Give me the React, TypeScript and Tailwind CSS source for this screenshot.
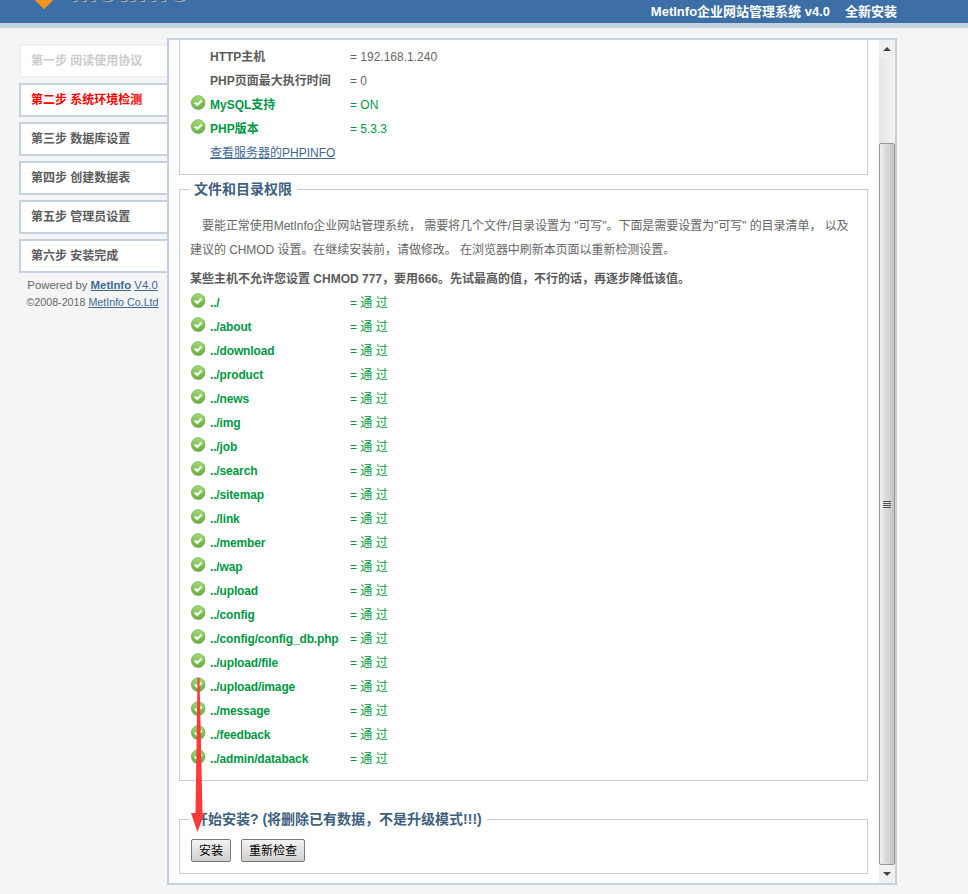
const font = '[font-family:"Liberation_Sans","Noto_Sans_CJK_SC",sans-serif]'

const steps = [
  { label: '第一步 阅读使用协议', state: 'done' },
  { label: '第二步 系统环境检测', state: 'active' },
  { label: '第三步 数据库设置', state: 'todo' },
  { label: '第四步 创建数据表', state: 'todo' },
  { label: '第五步 管理员设置', state: 'todo' },
  { label: '第六步 安装完成', state: 'todo' },
]

const paths = [
  '../',
  '../about',
  '../download',
  '../product',
  '../news',
  '../img',
  '../job',
  '../search',
  '../sitemap',
  '../link',
  '../member',
  '../wap',
  '../upload',
  '../config',
  '../config/config_db.php',
  '../upload/file',
  '../upload/image',
  '../message',
  '../feedback',
  '../admin/databack',
]

function OkIcon() {
  return (
    <svg width="15" height="16" viewBox="0 0 15 16" className="ml-px shrink-0" aria-hidden="true">
      <defs>
        <linearGradient id="ok-fill" x1="0" y1="0" x2="0" y2="1">
          <stop offset="0" stopColor="#a5dc74" />
          <stop offset="1" stopColor="#5fb53c" />
        </linearGradient>
      </defs>
      <circle cx="7.2" cy="8.4" r="7" fill="#c8c8c8" />
      <circle cx="7.2" cy="7.4" r="6.7" fill="url(#ok-fill)" stroke="#69ad4a" strokeWidth="0.8" />
      <path d="M3.9 7.5 L6.3 9.9 L10.7 5.5" fill="none" stroke="#ffffff" strokeWidth="2.2" />
    </svg>
  )
}

function Row({ ok, label, value, green, tight }: { ok?: boolean; label: string; value: string; green?: boolean; tight?: boolean }) {
  return (
    <div className="flex h-6 items-center">
      <div className="flex w-[20px] -translate-y-[2px] items-center">{ok && <OkIcon />}</div>
      <div className={`w-[140px] font-bold ${tight ? 'tracking-[-0.15px]' : ''} ${green ? 'text-[#009944]' : 'text-[#5c5c5c]'}`}>{label}</div>
      <div className={green ? 'text-[#009944]' : 'text-[#666666]'}>{value}</div>
    </div>
  )
}

function Legend({ children }: { children: React.ReactNode }) {
  return (
    <div className="absolute -top-[10px] left-[9px] bg-white px-[5px] text-sm leading-[18px] font-bold text-[#3f5f80]">
      {children}
    </div>
  )
}

function Scrollbar() {
  return (
    <div className="flex w-[16px] shrink-0 flex-col bg-[#f0f0f0]">
      <div className="flex h-[18px] items-center justify-center">
        <div className="h-0 w-0 border-x-[4px] border-b-[4px] border-x-transparent border-b-[#444444]" />
      </div>
      <div className="h-[85px] bg-gradient-to-r from-[#e6e6e6] to-[#f4f4f4]" />
      <div className="flex flex-1 items-center justify-center rounded-[2px] border border-[#979797] bg-gradient-to-r from-[#f0f0f0] via-[#d8d8d8] to-[#c4c4c4]">
        <div className="flex w-[8px] flex-col gap-[1px]">
          <div className="h-px bg-[#555555]" />
          <div className="h-px bg-[#555555]" />
          <div className="h-px bg-[#555555]" />
          <div className="h-px bg-[#555555]" />
        </div>
      </div>
      <div className="flex h-[18px] items-center justify-center">
        <div className="h-0 w-0 border-x-[4px] border-t-[4px] border-x-transparent border-t-[#444444]" />
      </div>
    </div>
  )
}

function DownArrow() {
  // red annotation drawn over the screenshot
  return (
    <svg className="pointer-events-none absolute top-[678px] left-[190px]" width="16" height="155" viewBox="0 0 16 155" aria-hidden="true">
      <path d="M7.5 0 L9.5 0 L12.5 135 L14.5 135 L7.5 154 L1 135 L5.5 135 Z" fill="#fc3a3a" />
    </svg>
  )
}

export default function App() {
  return (
    <div className={`relative h-[894px] overflow-hidden bg-[#f5f5f5] text-xs ${font}`}>
      <header className="flex h-[28px] justify-between overflow-hidden border-b-[5px] border-[#c3d1e0] bg-[#3b6fa6]">
        <div className="flex items-start pl-[34px]">
          <div className="-mt-[15px] h-[20px] w-[20px] rotate-45 bg-[#f7941d]" />
          <div className="-mt-[26px] ml-[16px] text-[32px] leading-[32px] font-bold tracking-wide text-[#4a5560] [text-shadow:1px_1px_0_#9fb0c0]">MetInfo</div>
        </div>
        <div className="flex h-[23px] items-center gap-[15px] pr-[71px] text-[13px] font-bold text-white">
          <span>MetInfo企业网站管理系统 v4.0</span>
          <span>全新安装</span>
        </div>
      </header>

      <div className="flex items-start pt-[10px] pl-[19px]">
        <aside className="w-[148px] shrink-0 pt-[6px]">
          <nav className="flex flex-col gap-[5px] font-bold">
            {steps.map((step) =>
              step.state === 'done' ? (
                <div key={step.label} className="flex h-[34px] items-center border-[2px] border-r-0 border-[#f0f0f0] bg-white pl-[10px] text-[#cccccc]">
                  {step.label}
                </div>
              ) : (
                <div
                  key={step.label}
                  className={`flex h-[34px] items-center border-[2px] border-r-0 border-[#c3d1e0] bg-white pl-[10px] ${step.state === 'active' ? 'text-[#ff0000]' : 'text-[#5c5c5c]'}`}
                >
                  {step.label}
                </div>
              ),
            )}
          </nav>
          <div className="pt-[4px] pr-px text-center leading-[17px] text-[#666666]">
            <div className="text-[11.4px]">
              Powered by <span className="font-bold text-[#3f6a94] underline">MetInfo</span>{' '}
              <span className="text-[#3f6a94] underline">V4.0</span>
            </div>
            <div className="text-[10.7px]">
              ©2008-2018 <span className="text-[#3f6a94] underline">MetInfo Co.Ltd</span>
            </div>
          </div>
        </aside>

        <main className="flex h-[847px] w-[730px] shrink-0 border-[2px] border-[#c3d1e0] bg-white">
          <div className="w-[710px] shrink-0 overflow-hidden pl-[10px]">
            <section className="h-[135px] w-[689px] border border-t-0 border-[#cccccc] px-[10px] pt-[5px]">
              <Row label="HTTP主机" value="= 192.168.1.240" />
              <Row label="PHP页面最大执行时间" value="= 0" />
              <Row ok green label="MySQL支持" value="= ON" />
              <Row ok green label="PHP版本" value="= 5.3.3" />
              <div className="flex h-6 items-center pl-[20px]">
                <span className="text-[#3f6a94] underline">查看服务器的PHPINFO</span>
              </div>
            </section>

            <section className="relative mt-[14px] h-[592px] w-[689px] border border-[#cccccc] px-[10px] pt-[24px]">
              <Legend>文件和目录权限</Legend>
              <p className="indent-[12px] leading-[24px] tracking-[-0.05px] text-[#666666]">
                要能正常使用MetInfo企业网站管理系统， 需要将几个文件/目录设置为 "可写"。下面是需要设置为"可写" 的目录清单， 以及建议的 CHMOD 设置。在继续安装前，请做修改。 在浏览器中刷新本页面以重新检测设置。
              </p>
              <p className="mt-[5px] leading-[24px] font-bold text-[#5c5c5c]">
                某些主机不允许您设置 CHMOD 777，要用666。先试最高的值，不行的话，再逐步降低该值。
              </p>
              <div>
                {paths.map((path) => (
                  <Row key={path} ok green tight label={path} value="= 通 过" />
                ))}
              </div>
            </section>

            <section className="relative mt-[38px] h-[55px] w-[689px] border border-[#cccccc] pt-[19px] pl-[11px]">
              <Legend>开始安装? (将删除已有数据，不是升级模式!!!)</Legend>
              <div className="flex gap-[10px]">
                <button type="button" className="h-[23px] w-[40px] rounded-[2px] border border-[#777777] bg-gradient-to-b from-[#f4f4f4] to-[#cfcfcf] pt-px text-xs text-black">
                  安装
                </button>
                <button type="button" className="h-[23px] w-[64px] rounded-[2px] border border-[#777777] bg-gradient-to-b from-[#f4f4f4] to-[#cfcfcf] pt-px text-xs text-black">
                  重新检查
                </button>
              </div>
            </section>
          </div>
          <Scrollbar />
        </main>
      </div>
      <DownArrow />
    </div>
  )
}
